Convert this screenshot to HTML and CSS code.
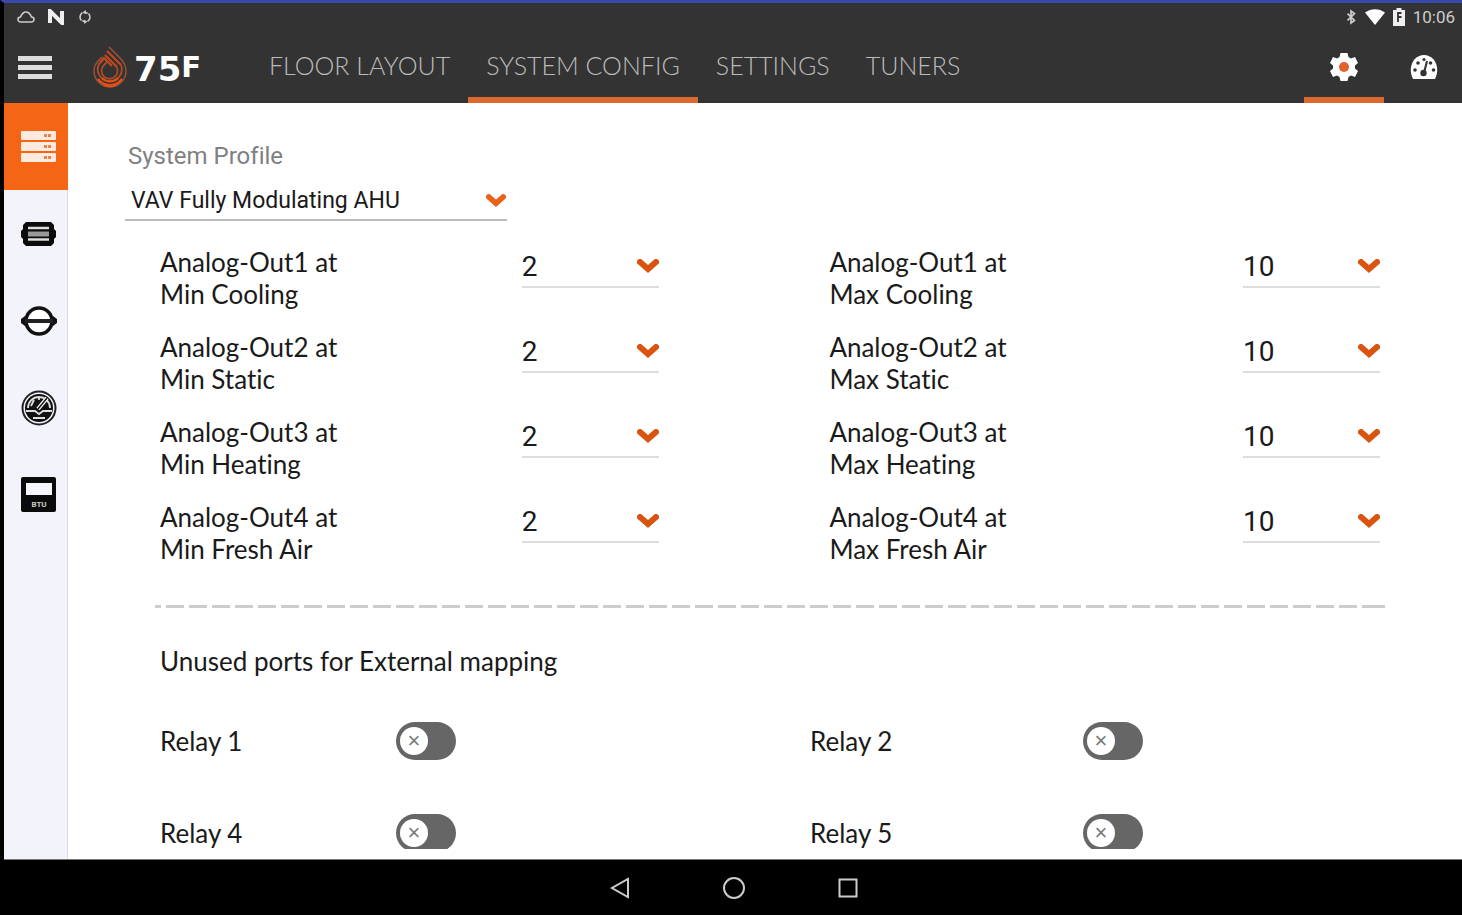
FILE: index.html
```html
<!DOCTYPE html>
<html lang="en">

<head>
    <meta charset="UTF-8">
    <meta name="viewport" content="width=device-width, initial-scale=1.0">
    <title>75F - System Config</title>
    <link rel="stylesheet" href="styles.css">
</head>

<body>
    <svg width="0" height="0" class="defs" aria-hidden="true">
        <symbol id="chevron" viewBox="0 0 22 15">
            <path d="M3 3l8 7 8-7" fill="none" stroke="currentColor" stroke-width="6" stroke-linecap="round" />
        </symbol>
    </svg>

    <header>
        <div class="status-bar">
            <div class="status-group">
                <svg width="18" height="16" viewBox="0 0 18 16" fill="none" stroke="#ccc" stroke-width="1.6"><path d="M3.500 13a2.500 2.500 0 0 1 0-5C5 4.500 7 3 9 3s4 1.500 5.500 5a2.500 2.500 0 0 1 0 5z" /></svg>
                <svg width="18" height="16" viewBox="0 0 18 16" fill="none" stroke="#eee" stroke-width="4"><path d="M3 14V2l12 12V2" /></svg>
                <svg width="16" height="18" viewBox="0 0 18 18" fill="none" stroke="#ccc" stroke-width="1.8"><path d="M6 4a6 6 0 0 0-1 9M12 14a6 6 0 0 0 1-9" /><path d="M6 4l4-3v5zM12 14l-4 3v-5z" fill="#ccc" stroke="none" /><path d="M9 3.500l3 1.500M9 14.500L6 13" /></svg>
            </div>
            <div class="status-group right">
                <svg width="12" height="18" viewBox="0 0 14 18" fill="none" stroke="#ccc" stroke-width="2"><path d="M3 5l8 8-4 3V2l4 3-8 8" /></svg>
                <svg width="20" height="16" viewBox="0 0 20 16" fill="#fff"><path d="M0 3.500C6-1 14-1 20 3.500L10 16z" /></svg>
                <svg width="12" height="18" viewBox="0 0 12 18"><path d="M3.500 0h5v2H12v16H0V2h3.500z" fill="#eee" /><path d="M8.500 5H5v9M5 9h3.500" fill="none" stroke="#333" stroke-width="1.8" /></svg>
                <span>10:06</span>
            </div>
        </div>

        <div class="app-bar">
            <button class="menu-button" aria-label="Menu"><span></span><span></span><span></span></button>
            <div class="logo">
                <svg width="36" height="44" viewBox="0 0 36 44" fill="none" stroke-linecap="butt">
                    <path d="M17 2l11 11c4 4 6 8 6 13a16 16 0 0 1-32 0c0-5 2-8 5-11l3-3" stroke="#9a5238" stroke-width="1.500" />
                    <path d="M15 6l14 14M13 10l12 12M8 17l4-4 8 8" stroke="#c9491c" stroke-width="2" />
                    <path d="M29 20a12 12 0 1 1-22-1l4-4" stroke="#b54a25" stroke-width="1.800" />
                    <path d="M24 21a8 8 0 1 1-12-1l3-3" stroke="#a54c2c" stroke-width="1.800" />
                    <path d="M6 34a15 15 0 0 0 24 0M10 33a11 11 0 0 0 16 0M12 40a16 16 0 0 0 12 0" stroke="#e2501a" stroke-width="2.200" />
                </svg>
                <span class="logo-text">75<small>F</small></span>
            </div>
            <nav class="tabs">
                <a href="#">FLOOR LAYOUT</a>
                <a href="#" class="active">SYSTEM CONFIG</a>
                <a href="#">SETTINGS</a>
                <a href="#">TUNERS</a>
            </nav>
            <div class="actions">
                <button class="active" aria-label="Configuration">
                    <svg width="28" height="28" viewBox="0 0 28 28">
                        <path d="M10.500 0h7l1 4 2.500 1.500 4-1.500 3 6-3 2.500v3l3 2.500-3 6-4-1.500-2.500 1.500-1 4h-7l-1-4L7 22.500 3 24l-3-6 3-2.500v-3L0 10l3-6 4 1.500L9.500 4z" fill="#fff" />
                        <circle cx="14" cy="14" r="5" fill="#e0622a" />
                    </svg>
                </button>
                <button aria-label="Dashboard">
                    <svg width="28" height="24" viewBox="0 0 28 24">
                        <path d="M3 24C-3 12 4 0 14 0s17 12 11 24z" fill="#fff" />
                        <g fill="#333"><circle cx="5" cy="15" r="1.800" /><circle cx="8" cy="8" r="1.800" /><circle cx="14" cy="4.500" r="1.600" /><circle cx="20.500" cy="8" r="1.800" /><circle cx="23.500" cy="15" r="1.800" /><circle cx="13.500" cy="18" r="3.200" /></g>
                        <path d="M14 18l3-12" stroke="#333" stroke-width="2" />
                    </svg>
                </button>
            </div>
        </div>
    </header>

    <div class="main">
        <aside>
            <button class="active" aria-label="System">
                <svg width="36" height="32" viewBox="0 0 36 32">
                    <g fill="#ffeadf"><rect width="35" height="9" rx="1" /><rect y="11" width="35" height="9" rx="1" /><rect y="22" width="35" height="9" rx="1" /></g>
                    <path d="M23 4.500h3m1 0h3M23 15.500h3m1 0h3M23 26.500h3m1 0h3" stroke="#f0824a" stroke-width="3" />
                </svg>
            </button>
            <button aria-label="Terminal units">
                <svg width="36" height="26" viewBox="0 0 36 26">
                    <path d="M5 1h25l3 3v4l2 2v6l-2 2v4l-3 3H5l-3-3v-4l-2-2v-6l2-2V4z" fill="#0b0b0b" />
                    <path d="M7 7h21M7 18.500h21" stroke="#ddd" stroke-width="2.500" />
                    <path d="M7 13h21" stroke="#999" stroke-width="5" />
                </svg>
            </button>
            <button aria-label="Bypass damper">
                <svg width="36" height="30" viewBox="0 0 36 30">
                    <circle cx="18" cy="15" r="13" fill="#fff" stroke="#111" stroke-width="3.500" />
                    <path d="M3 15h30" stroke="#222" stroke-width="4" />
                    <path d="M4 10l-4 3v4l4 3zM32 10l4 3v4l-4 3z" fill="#111" />
                </svg>
            </button>
            <button aria-label="Energy meter">
                <svg width="36" height="36" viewBox="0 0 36 36" fill="none">
                    <circle cx="18" cy="18" r="16.500" fill="#f3f3fc" stroke="#222" stroke-width="2" />
                    <circle cx="18" cy="18" r="14" fill="#111" />
                    <path d="M7 18a11 11 0 0 1 22 0M5 21h9l4 3 4-3h9M12 28h12M13 10l-3 6M18 6v4" stroke="#ddd" stroke-width="1.800" />
                    <path d="M17 19l9-11" stroke="#fff" stroke-width="4" />
                    <path d="M17 19l9-11" stroke="#111" stroke-width="1.500" />
                </svg>
            </button>
            <button aria-label="BTU meter">
                <svg width="36" height="36" viewBox="0 0 36 36">
                    <rect width="35" height="35" rx="2" fill="#0b0b0b" />
                    <rect x="5" y="6" width="26" height="12" fill="#f6f6fc" />
                    <text x="18" y="30" text-anchor="middle" class="btu">BTU</text>
                </svg>
            </button>
        </aside>

        <main>
            <div class="content">
                <div class="profile">
                    <label for="profile">System Profile</label>
                    <div class="select">
                        <select id="profile"><option>VAV Fully Modulating AHU</option></select>
                        <svg><use href="#chevron" /></svg>
                    </div>
                </div>

                <div class="analog-grid">
                    <label for="min1">Analog-Out1 at<br>Min Cooling</label>
                    <div class="select"><select id="min1"><option>2</option></select><svg><use href="#chevron" /></svg></div>
                    <label for="max1">Analog-Out1 at<br>Max Cooling</label>
                    <div class="select"><select id="max1"><option>10</option></select><svg><use href="#chevron" /></svg></div>

                    <label for="min2">Analog-Out2 at<br>Min Static</label>
                    <div class="select"><select id="min2"><option>2</option></select><svg><use href="#chevron" /></svg></div>
                    <label for="max2">Analog-Out2 at<br>Max Static</label>
                    <div class="select"><select id="max2"><option>10</option></select><svg><use href="#chevron" /></svg></div>

                    <label for="min3">Analog-Out3 at<br>Min Heating</label>
                    <div class="select"><select id="min3"><option>2</option></select><svg><use href="#chevron" /></svg></div>
                    <label for="max3">Analog-Out3 at<br>Max Heating</label>
                    <div class="select"><select id="max3"><option>10</option></select><svg><use href="#chevron" /></svg></div>

                    <label for="min4">Analog-Out4 at<br>Min Fresh Air</label>
                    <div class="select"><select id="min4"><option>2</option></select><svg><use href="#chevron" /></svg></div>
                    <label for="max4">Analog-Out4 at<br>Max Fresh Air</label>
                    <div class="select"><select id="max4"><option>10</option></select><svg><use href="#chevron" /></svg></div>
                </div>

                <div class="divider"></div>

                <h2>Unused ports for External mapping</h2>

                <div class="relay-grid">
                    <label for="relay1">Relay 1</label>
                    <input type="checkbox" id="relay1" class="toggle">
                    <label for="relay2">Relay 2</label>
                    <input type="checkbox" id="relay2" class="toggle">
                    <label for="relay4">Relay 4</label>
                    <input type="checkbox" id="relay4" class="toggle">
                    <label for="relay5">Relay 5</label>
                    <input type="checkbox" id="relay5" class="toggle">
                </div>
            </div>
        </main>
    </div>

    <footer>
        <button aria-label="Back"><svg width="24" height="24" viewBox="0 0 24 24"><path d="M20 3v18L4 12z" /></svg></button>
        <button aria-label="Home"><svg width="24" height="24" viewBox="0 0 24 24"><circle cx="12" cy="12" r="10" /></svg></button>
        <button aria-label="Recent apps"><svg width="24" height="24" viewBox="0 0 24 24"><rect x="3.500" y="3.500" width="17" height="17" /></svg></button>
    </footer>
</body>

</html>
```
FILE: styles.css
```css
* {
    box-sizing: border-box;
}

body {
    font-family: Lato, sans-serif;
    font-variant-ligatures: none;
    margin: 0;
    height: 100vh;
    display: flex;
    flex-direction: column;
    overflow: hidden;
    background: #fff;
    color: #1a1a1a;
    border-top: 3px solid #3949ab;
    border-left: 4px solid #000;
}

button {
    border: none;
    padding: 0;
    background: none;
    cursor: pointer;
    display: flex;
    align-items: center;
    justify-content: center;
}

.defs {
    position: absolute;
}

header {
    background: #333;
    color: white;
}

.status-bar {
    height: 28px;
    padding: 0 7px 0 13px;
    display: flex;
    align-items: center;
    justify-content: space-between;
    font-family: Roboto, sans-serif;
    font-size: 17px;
    color: #ccc;
}

.status-group {
    display: flex;
    align-items: center;
    gap: 12px;
}

.status-group.right {
    gap: 8px;
}

.app-bar {
    height: 72px;
    display: flex;
    overflow: hidden;
}

.menu-button {
    width: 62px;
    flex-direction: column;
    gap: 4px;
}

.menu-button span {
    width: 34px;
    height: 5px;
    background: #ddd;
}

.logo {
    width: 185px;
    padding-left: 26px;
    display: flex;
    align-items: center;
    gap: 6px;
}

.logo-text {
    display: flex;
    padding-top: 3px;
    font-family: "DejaVu Sans", sans-serif;
    font-size: 34px;
    line-height: 40px;
    font-weight: 700;
}

.logo-text small {
    font-size: 29px;
    line-height: 36px;
}

.tabs {
    display: flex;
    flex: 1;
}

.tabs a {
    padding: 0 18px;
    font-size: 25px;
    line-height: 69px;
    font-weight: 300;
    color: #bbb;
    text-decoration: none;
    white-space: nowrap;
}

.tabs .active,
.actions .active {
    border-bottom: 6px solid #dc692f;
}

.actions {
    display: flex;
    margin-right: -2px;
}

.actions button {
    width: 80px;
    border-bottom: 6px solid transparent;
    padding-top: 6px;
}

.main {
    flex: 1;
    min-height: 0;
    display: flex;
}

aside {
    width: 64px;
    background: #f3f3fc;
    border-right: 1px solid #dcdce6;
}

aside button {
    width: 64px;
    height: 87px;
    padding-left: 6px;
}

aside .active {
    background: #f46516;
}

.btu {
    font: bold 8px Roboto, sans-serif;
    fill: #ccc;
}

main {
    flex: 1;
    padding-bottom: 10px;
    display: flex;
}

.content {
    flex: 1;
    overflow: hidden;
    padding: 37px 82px 0 92px;
    font-size: 26px;
    line-height: 32px;
}

.select {
    position: relative;
    width: 137px;
    height: 42px;
    border-bottom: 2px solid #ddd;
}

.select select {
    appearance: none;
    width: 100%;
    height: 100%;
    border: none;
    background: none;
    font-family: Roboto, sans-serif;
    font-size: 28px;
    color: #1a1a1a;
}

.select svg {
    position: absolute;
    right: 0;
    top: 13px;
    width: 22px;
    height: 15px;
    color: #d9540f;
    pointer-events: none;
}

.profile {
    width: 382px;
    margin: 0 0 25px -35px;
    font-family: Roboto, sans-serif;
    font-size: 24px;
}

.profile label {
    padding-left: 3px;
    color: #808080;
}

.profile .select {
    width: 382px;
    height: 39px;
    margin-top: 10px;
    border-bottom-color: #bbb;
}

.profile .select select {
    font-size: 23px;
    padding-left: 6px;
}

.profile .select svg {
    top: 12px;
    width: 20px;
    height: 14px;
    right: 1px;
    color: #ee5f1a;
}

.analog-grid {
    display: grid;
    grid-template-columns: 362fr 308fr 414fr 136fr;
    row-gap: 21px;
}

.divider {
    height: 3px;
    margin: 40px -5px 0;
    background: repeating-linear-gradient(90deg, #ccc 0 18px, transparent 18px 23px) -12px 0;
}

h2 {
    margin: 37px 0 45px;
    font-size: 26px;
    line-height: 32px;
    font-weight: 400;
}

.relay-grid {
    display: grid;
    grid-template-columns: 236fr 414fr 273fr 297fr;
    row-gap: 54px;
    align-items: center;
}

.relay-grid label {
    line-height: 38px;
}

.toggle {
    appearance: none;
    position: relative;
    width: 60px;
    height: 38px;
    margin: 0;
    border-radius: 19px;
    background: #666;
}

.toggle::before {
    content: "×";
    position: absolute;
    left: 4px;
    top: 5px;
    width: 28px;
    height: 28px;
    border-radius: 50%;
    background: #fff;
    color: #777;
    font-size: 22px;
    line-height: 27px;
    text-align: center;
}

.toggle:checked {
    background: #f46516;
}

.toggle:checked::before {
    left: 28px;
}

footer {
    height: 56px;
    padding-left: 2px;
    border-top: 1px solid #777;
    background: #000;
    display: flex;
    align-items: center;
    justify-content: center;
    gap: 90px;
}

footer svg {
    fill: none;
    stroke: #ccc;
    stroke-width: 2;
}
```
